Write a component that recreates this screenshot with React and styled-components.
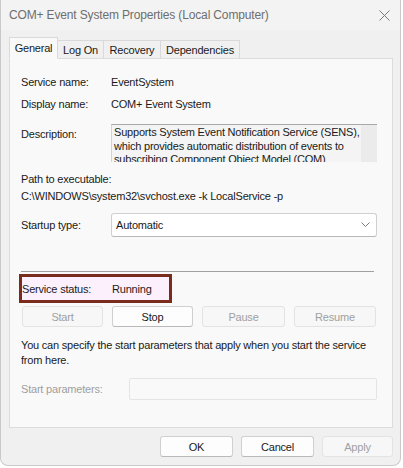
import React from 'react';
import styled, { createGlobalStyle } from 'styled-components';

const GlobalStyle = createGlobalStyle`
  html, body {
    margin: 0;
    padding: 0;
    background: #ffffff;
  }
  body {
    font-family: "Liberation Sans", Arial, sans-serif;
    font-size: 11px;
    letter-spacing: -0.2px;
    color: #1a1a1a;
  }
`;

const Window = styled.div`
  width: 401px;
  height: 466px;
  box-sizing: border-box;
  background: #f0f0f0;
  border: 1px solid #c9c9c9;
  border-top: none;
  border-radius: 0 0 8px 8px;
  display: flex;
  flex-direction: column;
`;

const TitleBar = styled.div`
  height: 30px;
  display: flex;
  align-items: center;
  justify-content: space-between;
  padding: 0 10px 0 8px;
  background: #f3f3f3;
`;

const Title = styled.span`
  font-size: 12px;
  letter-spacing: -0.15px;
  color: #6e6e6e;
`;

const CloseIcon = styled.svg`
  width: 11px;
  height: 11px;
`;

const Body = styled.div`
  flex: 1;
  display: flex;
  flex-direction: column;
  padding: 6px 7px 0 8px;
`;

const TabStrip = styled.div`
  display: flex;
  align-items: flex-end;
  height: 22px;
  position: relative;
  z-index: 1;
`;

const Tab = styled.div`
  width: ${p => p.width}px;
  height: ${p => (p.active ? '22px' : '18px')};
  box-sizing: border-box;
  display: flex;
  align-items: center;
  justify-content: center;
  background: ${p => (p.active ? '#f9f9f9' : '#f0f0f0')};
  border: 1px solid #d9d9d9;
  border-bottom: ${p => (p.active ? '1px solid #f9f9f9' : 'none')};
  margin-left: ${p => (p.first ? '0' : '-1px')};
  margin-bottom: ${p => (p.active ? '-1px' : '0')};
  color: #1a1a1a;
`;

const Panel = styled.div`
  height: 370px;
  box-sizing: border-box;
  background: #f9f9f9;
  border: 1px solid #dcdcdc;
  padding: 15px 15px 0 11px;
  display: flex;
  flex-direction: column;
`;

const FieldRow = styled.div`
  display: grid;
  grid-template-columns: ${p => p.labelWidth || 90}px 1fr;
  align-items: ${p => (p.top ? 'start' : 'center')};
  margin-top: ${p => p.gap || 0}px;
  min-height: 16px;
`;

const Label = styled.span`
  color: ${p => (p.disabled ? '#9f9f9f' : '#1a1a1a')};
  padding-top: ${p => p.offset || 0}px;
`;

const Value = styled.span`
  color: #1a1a1a;
`;

const DescriptionBox = styled.div`
  height: 37px;
  overflow: hidden;
  display: flex;
  background: #f4f4f4;
  border-top: 1px solid #a8a8a8;
  border-left: 1px solid #d2d2d2;
`;

const DescriptionText = styled.div`
  flex: 1;
  padding: 1px 0 0 2px;
  line-height: 13.5px;
`;

const ScrollTrack = styled.div`
  width: 16px;
  background: #ebebeb;
`;

const PathBlock = styled.div`
  margin-top: 9px;
  display: flex;
  flex-direction: column;
  line-height: 17px;
`;

const Select = styled.div`
  height: 24px;
  box-sizing: border-box;
  background: #ffffff;
  border: 1px solid #d0d0d0;
  border-bottom-color: #b8b8b8;
  border-radius: 3px;
  display: flex;
  align-items: center;
  justify-content: space-between;
  padding: 0 6px 0 4px;
`;

const Divider = styled.div`
  margin-top: 34px;
  margin-right: 3px;
  height: 1px;
  background: #a0a0a0;
`;

const StatusBox = styled.div`
  margin-top: 2px;
  margin-left: -2px;
  width: 153px;
  height: 29px;
  box-sizing: border-box;
  border: 3px solid #7a2c1c;
  background: #fdf0fd;
  display: grid;
  grid-template-columns: 90px 1fr;
  align-items: center;
`;

const ButtonRow = styled.div`
  margin-top: 3px;
  margin-left: 1px;
  display: grid;
  grid-template-columns: 81px 81px 83px 82px;
  column-gap: 9px;
`;

const Button = styled.div`
  height: 21px;
  box-sizing: border-box;
  display: flex;
  align-items: center;
  justify-content: center;
  border-radius: 3px;
  border: 1px solid ${p => (p.disabled ? '#e3e3e3' : '#d0d0d0')};
  border-bottom-color: ${p => (p.disabled ? '#e3e3e3' : '#b9b9b9')};
  background: ${p => (p.disabled ? '#f7f7f7' : '#fdfdfd')};
  color: ${p => (p.disabled ? '#a0a0a0' : '#1a1a1a')};
  width: ${p => (p.width ? `${p.width}px` : 'auto')};
`;

const Note = styled.p`
  margin: 11px 0 0 0;
  line-height: 15px;
`;

const ParamInput = styled.div`
  height: 22px;
  box-sizing: border-box;
  border: 1px solid #e4e4e4;
  border-radius: 2px;
  background: #f9f9f9;
`;

const Footer = styled.div`
  flex: 1;
  display: flex;
  justify-content: flex-end;
  align-items: flex-start;
  padding-top: 8px;
  gap: 8px;
`;

const tabs = [
  { name: 'General', width: 49 },
  { name: 'Log On', width: 47 },
  { name: 'Recovery', width: 58 },
  { name: 'Dependencies', width: 80 },
];

export default function App() {
  return (
    <>
      <GlobalStyle />
      <Window>
        <TitleBar>
          <Title>COM+ Event System Properties (Local Computer)</Title>
          <CloseIcon viewBox="0 0 11 11">
            <path d="M0.5 0.5 L10.5 10.5 M10.5 0.5 L0.5 10.5" stroke="#7a7a7a" strokeWidth="1" fill="none" />
          </CloseIcon>
        </TitleBar>
        <Body>
          <TabStrip>
            {tabs.map((t, i) => (
              <Tab key={t.name} width={t.width} active={i === 0} first={i === 0}>{t.name}</Tab>
            ))}
          </TabStrip>
          <Panel>
            <FieldRow>
              <Label>Service name:</Label>
              <Value>EventSystem</Value>
            </FieldRow>
            <FieldRow gap={6}>
              <Label>Display name:</Label>
              <Value>COM+ Event System</Value>
            </FieldRow>
            <FieldRow gap={12} top>
              <Label offset={4}>Description:</Label>
              <DescriptionBox>
                <DescriptionText>
                  Supports System Event Notification Service (SENS), which provides automatic distribution of events to subscribing Component Object Model (COM) components.
                </DescriptionText>
                <ScrollTrack />
              </DescriptionBox>
            </FieldRow>
            <PathBlock>
              <Label>Path to executable:</Label>
              <Value>C:\WINDOWS\system32\svchost.exe -k LocalService -p</Value>
            </PathBlock>
            <FieldRow gap={8}>
              <Label>Startup type:</Label>
              <Select>
                <span>Automatic</span>
                <svg width="9" height="6" viewBox="0 0 9 6">
                  <path d="M0.5 0.5 L4.5 4.5 L8.5 0.5" stroke="#7a7a7a" fill="none" strokeWidth="1" />
                </svg>
              </Select>
            </FieldRow>
            <Divider />
            <StatusBox>
              <Label>Service status:</Label>
              <Value>Running</Value>
            </StatusBox>
            <ButtonRow>
              <Button disabled>Start</Button>
              <Button>Stop</Button>
              <Button disabled>Pause</Button>
              <Button disabled>Resume</Button>
            </ButtonRow>
            <Note>
              You can specify the start parameters that apply when you start the service from here.
            </Note>
            <FieldRow gap={10} labelWidth={108}>
              <Label disabled>Start parameters:</Label>
              <ParamInput />
            </FieldRow>
          </Panel>
          <Footer>
            <Button width={73}>OK</Button>
            <Button width={73}>Cancel</Button>
            <Button width={71} disabled>Apply</Button>
          </Footer>
        </Body>
      </Window>
    </>
  );
}
